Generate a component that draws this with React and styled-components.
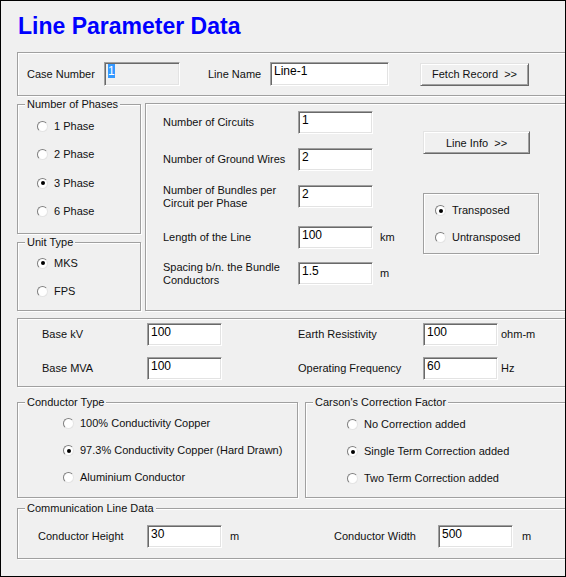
import React from 'react';
import styled, { createGlobalStyle, css } from 'styled-components';

const GlobalStyle = createGlobalStyle`
  html, body {
    margin: 0;
    padding: 0;
    background: #ffffff;
  }
  body {
    font-family: 'Liberation Sans', Arial, sans-serif;
  }
`;

const etched = css`
  box-sizing: border-box;
  border: 1px solid #a0a0a0;
  box-shadow: inset 1px 1px 0 #ffffff, 1px 1px 0 #ffffff;
`;

const Frame = styled.div`
  width: 566px;
  height: 577px;
  box-sizing: border-box;
  border: 1px solid #000;
  background: #f0f0f0;
  overflow: hidden;
  padding: 12px 0 0 16px;
  font-family: 'Liberation Sans', Arial, sans-serif;
  font-size: 11px;
  line-height: 13px;
  color: #111;
`;

const Title = styled.h1`
  margin: 0 0 0 1px;
  font-size: 23px;
  line-height: 26px;
  font-weight: bold;
  color: #0000ff;
`;

const Panel = styled.div`
  ${etched};
  flex-shrink: 0;
  width: ${(p) => p.$w || 560}px;
  height: ${(p) => p.$h}px;
  margin-top: ${(p) => p.$mt || 0}px;
  margin-left: ${(p) => p.$ml || 0}px;
`;

const TopBar = styled(Panel)`
  display: flex;
  align-items: center;
  padding-left: 9px;
`;

const GroupBox = styled(Panel)`
  position: relative;
`;

const Caption = styled.span`
  position: absolute;
  top: -7px;
  left: 7px;
  padding: 0 2px;
  background: #f0f0f0;
  white-space: nowrap;
`;

const Label = styled.span`
  flex-shrink: 0;
  width: ${(p) => (p.$w ? `${p.$w}px` : 'auto')};
  margin-left: ${(p) => p.$ml || 0}px;
  white-space: ${(p) => (p.$wrap ? 'normal' : 'nowrap')};
`;

const sunken = css`
  box-sizing: border-box;
  height: ${(p) => p.$h || 23}px;
  width: ${(p) => p.$w || 75}px;
  border: 1px solid;
  border-color: #a0a0a0 #ffffff #ffffff #a0a0a0;
  box-shadow: inset 1px 1px 0 #696969, inset -1px -1px 0 #e3e3e3;
  font-family: 'Liberation Sans', Arial, sans-serif;
  font-size: 12px;
`;

const TextBox = styled.input`
  ${sunken};
  flex-shrink: 0;
  background: #ffffff;
  color: #000;
  padding: 1px 2px 7px 3px;
  margin: 0;
  outline: none;
`;

const ReadBox = styled.div`
  ${sunken};
  flex-shrink: 0;
  background: #f0f0f0;
  padding: 2px 0 0 3px;
  line-height: 13px;
`;

const Selected = styled.span`
  background: #3399ff;
  color: #ffffff;
`;

const Button = styled.button`
  flex-shrink: 0;
  box-sizing: border-box;
  width: ${(p) => p.$w}px;
  height: ${(p) => p.$h || 23}px;
  margin: ${(p) => p.$mt || 0}px 0 0 ${(p) => p.$ml || 0}px;
  padding: 0;
  background: #f0f0f0;
  border: 1px solid;
  border-color: #e3e3e3 #696969 #696969 #e3e3e3;
  box-shadow: inset 1px 1px 0 #ffffff, inset -1px -1px 0 #a0a0a0;
  font-family: 'Liberation Sans', Arial, sans-serif;
  font-size: 11px;
  color: #111;
  white-space: pre;
`;

const Unit = styled.span`
  margin-left: ${(p) => p.$ml || 7}px;
`;

const Row = styled.div`
  display: flex;
  align-items: flex-start;
  margin-top: ${(p) => p.$mt || 0}px;
`;

const Column = styled.div`
  display: flex;
  flex-direction: column;
  flex-shrink: 0;
  width: ${(p) => (p.$w ? `${p.$w}px` : 'auto')};
`;

const RadioList = styled.div`
  display: flex;
  flex-direction: column;
  padding: ${(p) => p.$pt}px 0 0 ${(p) => p.$pl}px;
`;

const RadioRow = styled.div`
  display: flex;
  align-items: center;
  gap: 6px;
  height: ${(p) => p.$rh}px;
  white-space: nowrap;
`;

const RadioCircle = styled.span`
  box-sizing: border-box;
  flex-shrink: 0;
  width: 11px;
  height: 11px;
  border-radius: 50%;
  background: #ffffff;
  border: 1px solid;
  border-color: #7f7f7f #e4e4e4 #e4e4e4 #7f7f7f;
  display: flex;
  align-items: center;
  justify-content: center;

  &::after {
    content: '';
    display: ${(p) => (p.$on ? 'block' : 'none')};
    width: 4px;
    height: 4px;
    border-radius: 50%;
    background: #000;
  }
`;

const MiddlePanel = styled(Panel)`
  display: flex;
  padding-left: 17px;
`;

const FieldRow = styled.div`
  display: flex;
  align-items: center;
  height: 23px;
  margin-top: ${(p) => p.$mt}px;
`;

const FieldGrid = styled(Panel)`
  display: grid;
  grid-template-columns: ${(p) => p.$cols};
  grid-auto-rows: 23px;
  row-gap: 11px;
  align-items: center;
  padding: ${(p) => p.$pt}px 0 0 ${(p) => p.$pl}px;
`;

const Radios = ({ items, checked, pt, pl, rh }) => (
  <RadioList $pt={pt} $pl={pl}>
    {items.map((item) => (
      <RadioRow key={item} $rh={rh}>
        <RadioCircle $on={item === checked} />
        {item}
      </RadioRow>
    ))}
  </RadioList>
);

const lineFields = [
  { label: 'Number of Circuits', value: '1', mt: 7 },
  { label: 'Number of Ground Wires', value: '2', mt: 14 },
  { label: 'Number of Bundles per Circuit per Phase', value: '2', mt: 14 },
  { label: 'Length of the Line', value: '100', mt: 18, unit: 'km' },
  { label: 'Spacing b/n. the Bundle Conductors', value: '1.5', mt: 13, unit: 'm' }
];

const App = () => {
  return (
    <>
      <GlobalStyle />
      <Frame>
        <Title>Line Parameter Data</Title>

        <TopBar $h={44} $mt={13}>
          <Label $w={77}>Case Number</Label>
          <ReadBox $w={76} $h={24}>
            <Selected>1</Selected>
          </ReadBox>
          <Label $w={62} $ml={28}>Line Name</Label>
          <TextBox $w={119} $h={24} value='Line-1' readOnly />
          <Button $w={109} $ml={31}>{'Fetch Record  >>'}</Button>
        </TopBar>

        <Row $mt={7}>
          <Column $w={124}>
            <GroupBox $w={124} $h={130} $mt={1}>
              <Caption>Number of Phases</Caption>
              <Radios
                items={['1 Phase', '2 Phase', '3 Phase', '6 Phase']}
                checked='3 Phase'
                pt={7}
                pl={19}
                rh={28.5}
              />
            </GroupBox>
            <GroupBox $w={124} $h={69} $mt={8}>
              <Caption>Unit Type</Caption>
              <Radios items={['MKS', 'FPS']} checked='MKS' pt={6} pl={19} rh={28} />
            </GroupBox>
          </Column>

          <MiddlePanel $w={440} $h={208} $ml={4}>
            <Column $w={260}>
              {lineFields.map((f) => (
                <FieldRow key={f.label} $mt={f.mt}>
                  <Label $w={135} $wrap>{f.label}</Label>
                  <TextBox value={f.value} readOnly />
                  {f.unit && <Unit>{f.unit}</Unit>}
                </FieldRow>
              ))}
            </Column>
            <Column>
              <Button $w={107} $mt={27}>{'Line Info  >>'}</Button>
              <GroupBox $w={116} $h={61} $mt={39}>
                <Radios
                  items={['Transposed', 'Untransposed']}
                  checked='Transposed'
                  pt={3}
                  pl={11}
                  rh={27}
                />
              </GroupBox>
            </Column>
          </MiddlePanel>
        </Row>

        <FieldGrid $h={69} $mt={7} $pt={4} $pl={24} $cols='105px 75px 76px 125px 75px auto'>
          <Label>Base kV</Label>
          <TextBox value='100' readOnly />
          <span />
          <Label>Earth Resistivity</Label>
          <TextBox value='100' readOnly />
          <Unit $ml={3}>ohm-m</Unit>
          <Label>Base MVA</Label>
          <TextBox value='100' readOnly />
          <span />
          <Label>Operating Frequency</Label>
          <TextBox value='60' readOnly />
          <Unit $ml={3}>Hz</Unit>
        </FieldGrid>

        <Row $mt={15}>
          <GroupBox $w={281} $h={96}>
            <Caption>Conductor Type</Caption>
            <Radios
              items={[
                '100% Conductivity Copper',
                '97.3% Conductivity Copper (Hard Drawn)',
                'Aluminium Conductor'
              ]}
              checked='97.3% Conductivity Copper (Hard Drawn)'
              pt={7}
              pl={45}
              rh={27}
            />
          </GroupBox>
          <GroupBox $w={300} $h={96} $ml={7}>
            <Caption>Carson's Correction Factor</Caption>
            <Radios
              items={[
                'No Correction  added',
                'Single Term Correction added',
                'Two Term Correction added'
              ]}
              checked='Single Term Correction added'
              pt={8}
              pl={41}
              rh={27}
            />
          </GroupBox>
        </Row>

        <GroupBox $h={51} $mt={10}>
          <Caption>Communication Line Data</Caption>
          <FieldGrid
            as='div'
            style={{ border: 'none', boxShadow: 'none', width: 'auto', height: 'auto' }}
            $pt={16}
            $pl={20}
            $cols='109px 75px 112px 104px 75px auto'
          >
            <Label>Conductor Height</Label>
            <TextBox value='30' readOnly />
            <Unit $ml={8}>m</Unit>
            <Label>Conductor Width</Label>
            <TextBox value='500' readOnly />
            <Unit $ml={9}>m</Unit>
          </FieldGrid>
        </GroupBox>
      </Frame>
    </>
  );
};

export default App;
